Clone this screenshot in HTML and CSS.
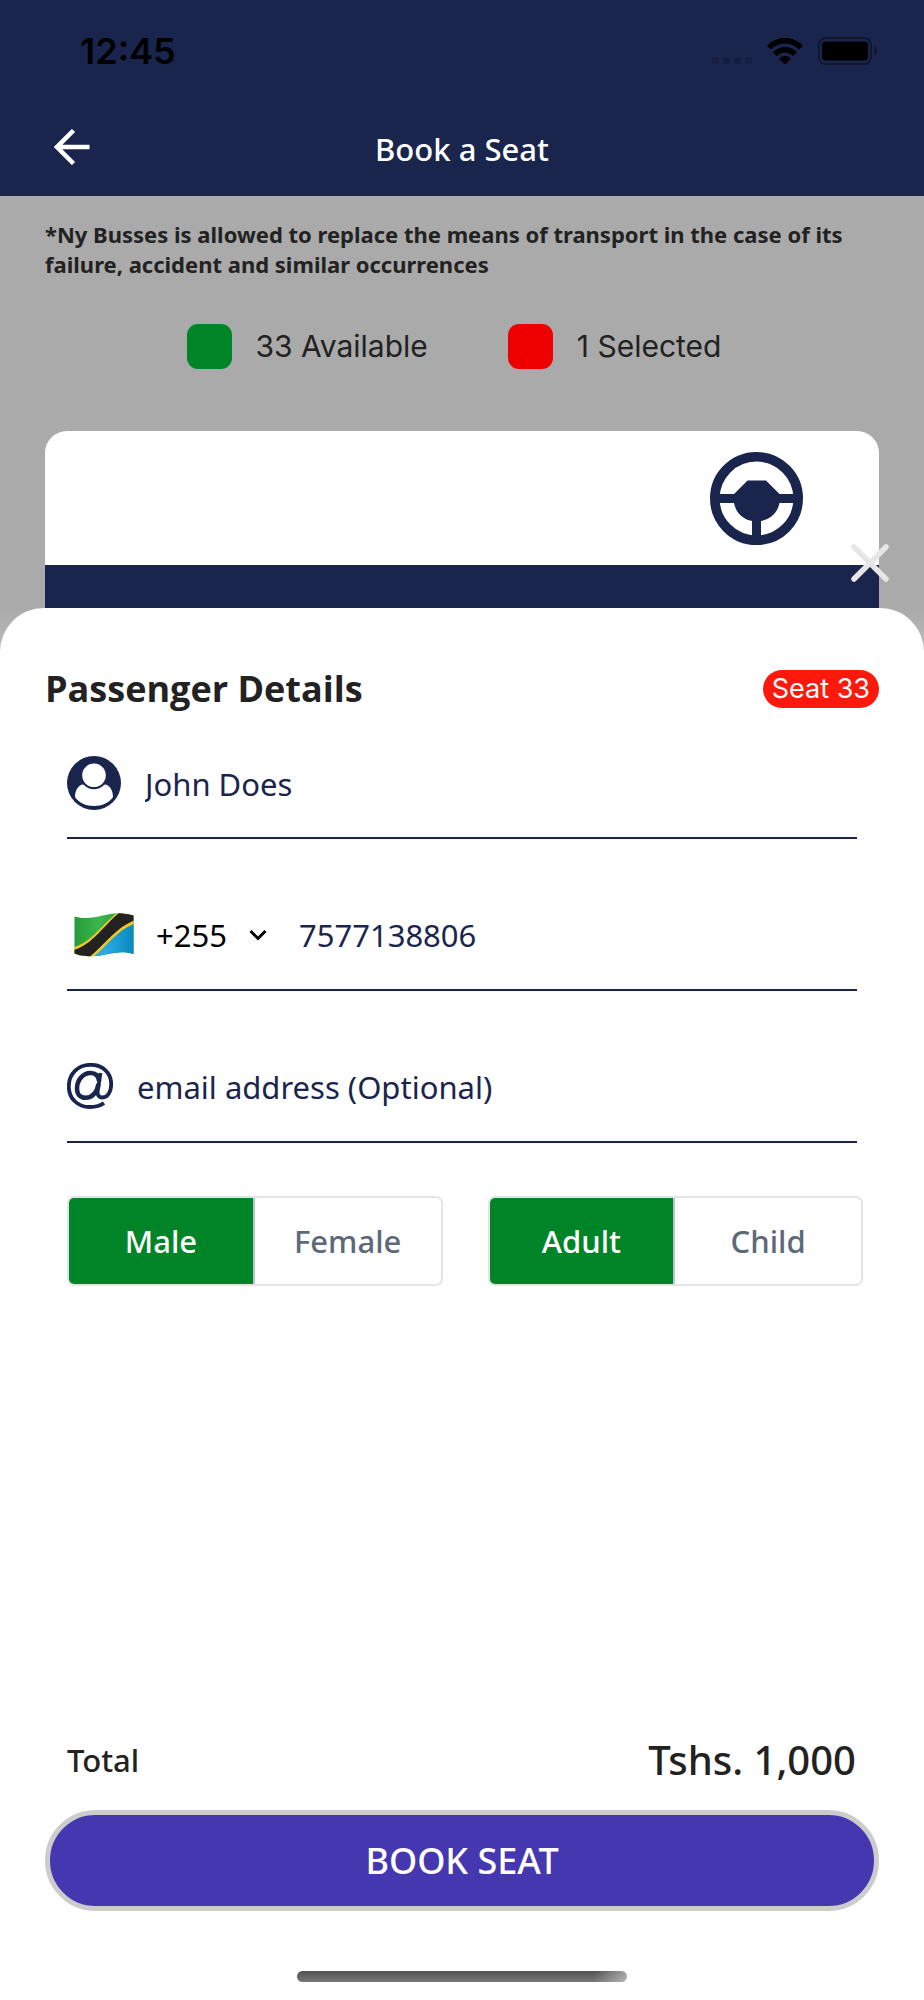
FILE: index.html
```html
<!DOCTYPE html>
<html lang="en">
<head>
<meta charset="utf-8">
<meta name="viewport" content="width=device-width, initial-scale=1">
<title>Book a Seat</title>
<link rel="stylesheet" href="styles.css">
</head>
<body>
<div class="app">
  <header class="header">
    <div class="status">
      <span class="status-time">12:45</span>
      <span class="status-icons">
        <span class="signal"><i></i><i></i><i></i><i></i></span>
        <svg class="wifi" viewBox="0 0 36 27" aria-hidden="true">
          <path d="M18 0C24.800 0 31 2.700 35.300 7.200Q35.900 7.900 35.300 8.600L32.700 11.100Q32 11.600 31.400 11C28 7.500 23.300 5.500 18 5.500S8 7.500 4.600 11Q4 11.600 3.300 11.100L.7 8.600Q.1 7.900.7 7.200C5 2.700 11.200 0 18 0Z"/>
          <path d="M18 9C22.500 9 26.500 10.800 29.400 13.700Q30 14.400 29.400 15L26.700 17.600Q26 18.200 25.300 17.600C23.300 15.700 20.800 14.600 18 14.600S12.700 15.700 10.700 17.600Q10 18.200 9.300 17.600L6.600 15Q6 14.400 6.600 13.700C9.500 10.800 13.500 9 18 9Z"/>
          <path d="M18 18C20 18 22 18.800 23.300 20.200Q23.700 20.800 23.200 21.400L18.700 26Q18 26.700 17.300 26L12.800 21.400Q12.300 20.800 12.700 20.200C14 18.800 16 18 18 18Z"/>
        </svg>
        <svg class="battery" viewBox="0 0 60 28" aria-hidden="true">
          <rect x="1" y="1" width="52" height="26" rx="7" fill="none" stroke="#11172f" stroke-width="2"/>
          <rect x="4" y="4.500" width="46" height="19" rx="4"/>
          <path d="M56 9.500Q59 10.500 59 14T56 18.500Z" fill="#11172f"/>
        </svg>
      </span>
    </div>
    <nav class="nav">
      <button class="back" type="button" aria-label="Back">
        <svg viewBox="0 0 36 36" aria-hidden="true"><path d="M35.500 18H3M19.500 1.500L3 18L19.500 34.500" fill="none" stroke="#fff" stroke-width="4.500"/></svg>
      </button>
      <h1 class="title">Book a Seat</h1>
    </nav>
  </header>

  <section class="preview">
    <p class="notice">*Ny Busses is allowed to replace the means of transport in the case of its failure, accident and similar occurrences</p>
    <div class="legend">
      <span class="legend-item"><i class="swatch swatch-free"></i>33 Available</span>
      <span class="legend-item"><i class="swatch swatch-picked"></i>1 Selected</span>
    </div>
    <div class="bus">
      <div class="cab">
        <svg class="wheel" viewBox="0 0 93 93" aria-hidden="true">
          <circle cx="46.500" cy="46.500" r="41.700" fill="none" stroke="#1a254e" stroke-width="9.600"/>
          <path fill="#1a254e" d="M5 42H24L37.500 28.500H56L69.500 42H88V51H69.500C68 60 60.500 67.500 51 69V88H42V69C32.500 67.500 25.500 60 24 51H5Z"/>
        </svg>
      </div>
      <div class="aisle"></div>
    </div>
  </section>

  <div class="sheet-area">
    <button class="close" type="button" aria-label="Close">
      <svg viewBox="0 0 38 38" aria-hidden="true"><path d="M3 3L35 35M35 3L3 35" fill="none" stroke="#e6e6e6" stroke-width="5.500" stroke-linecap="round"/></svg>
    </button>
    <form class="sheet">
      <div class="sheet-head">
        <h2 class="sheet-title">Passenger Details</h2>
        <span class="badge">Seat 33</span>
      </div>

      <div class="fields">
        <label class="field">
          <svg class="avatar" viewBox="0 0 54 54" aria-hidden="true">
            <circle cx="27" cy="27" r="27" fill="#1a254e"/>
            <path fill="#fff" d="M14.500 28.700C9.500 30.500 7.500 38 8.200 41.500C12 46.500 19 50 27 50S42 46.500 45.800 41.500C46.500 38 44.500 30.500 39.500 28.700Q37.500 28.200 36.500 29.500Q33 33.200 27 33.200T17.500 29.500Q16.500 28.200 14.500 28.700Z"/>
            <circle cx="27" cy="19.300" r="11.800" fill="#fff"/>
          </svg>
          <input class="input" type="text" aria-label="Name" value="John Does">
        </label>

        <div class="field field-phone">
          <svg class="flag" viewBox="0 0 60 44" aria-hidden="true">
            <defs>
              <clipPath id="cloth"><path d="M.5 3.500C20 8.500 32-1 48 .5Q55 .8 59.500 2.500V41C42 35.500 30 45 12 43Q5 42.500 .5 40.500Z"/></clipPath>
              <linearGradient id="green" x1="0" x2="1"><stop offset="0" stop-color="#239a37"/><stop offset=".4" stop-color="#3bb54c"/><stop offset="1" stop-color="#239a37"/></linearGradient>
              <linearGradient id="blue" x1="0" x2="1"><stop offset=".3" stop-color="#2bade4"/><stop offset="1" stop-color="#0787be"/></linearGradient>
            </defs>
            <g clip-path="url(#cloth)">
              <path fill="url(#green)" d="M0 0H60V44H0Z"/>
              <path fill="url(#blue)" d="M60 9C46 14 32 30 18 44H60Z"/>
              <path fill="#f3c823" d="M0 34C18 29 27 12 43 0H60V11C43 17 34 32 19 44H0Z"/>
              <path fill="#222" d="M0 37C19 31 29 13 45 0H60V7.500C43 14 31 31 15.500 44H0Z"/>
            </g>
          </svg>
          <span class="code">
            <select class="code-select" aria-label="Country code"><option>+255</option></select>
            <svg class="chevron" viewBox="0 0 18 12" aria-hidden="true"><path d="M1.500 2L9 9.500L16.500 2" fill="none" stroke="#000" stroke-width="3"/></svg>
          </span>
          <input class="input" type="tel" aria-label="Phone number" value="7577138806">
        </div>

        <label class="field field-email">
          <svg class="at" viewBox="0 0 46 46" aria-hidden="true">
            <g fill="none" stroke="#1a254e" stroke-width="3.500">
              <path d="M37 40C33 43 28 44 23 44C10.500 44 1.800 35.500 1.800 23.500C1.800 10.500 11 1.800 23.500 1.800C36 1.800 44.200 10 44.200 21C44.200 29 40.500 34.500 35.500 34.500C31.500 34.500 30 31.500 30.800 27.500L33.500 10" stroke-width="3.800"/>
              <path d="M32 18C31.500 12.500 28 10 23.500 10C15.500 10 10 17.500 10 25.500C10 31.500 13.500 34.800 18.500 34.800C25.500 34.800 30 29 31.500 21" stroke-width="4.500"/>
            </g>
          </svg>
          <input class="input" type="email" aria-label="Email address" placeholder="email address (Optional)">
        </label>
      </div>

      <div class="toggles">
        <div class="toggle" role="radiogroup" aria-label="Gender">
          <label class="option"><input type="radio" name="gender" checked><span>Male</span></label>
          <label class="option"><input type="radio" name="gender"><span>Female</span></label>
        </div>
        <div class="toggle" role="radiogroup" aria-label="Age group">
          <label class="option"><input type="radio" name="age" checked><span>Adult</span></label>
          <label class="option"><input type="radio" name="age"><span>Child</span></label>
        </div>
      </div>

      <div class="total">
        <span class="total-label">Total</span>
        <span class="total-value">Tshs. 1,000</span>
      </div>
      <button class="book" type="button">BOOK SEAT</button>
      <div class="home-indicator"></div>
    </form>
  </div>
</div>
</body>
</html>
```

FILE: styles.css
```css
* { box-sizing: border-box; }

body {
  margin: 0;
  background: #aaa;
  color: #222;
  font-family: "Noto Sans", "Open Sans", sans-serif;
}

button, input, select { font: inherit; }
svg { display: block; flex: none; }

.app {
  display: flex;
  flex-direction: column;
  min-height: 100vh;
}

.header {
  height: 196px;
  background: #1a254e;
}

.status {
  display: flex;
  align-items: center;
  justify-content: space-between;
  height: 102px;
  padding: 0 46px 0 80px;
  color: #000;
}

.status-time {
  font: 600 36px/40px Inter, sans-serif;
}

.status-icons { display: flex; align-items: center; }

.signal { display: flex; gap: 4px; margin: 18px 15px 0 0; }
.signal i { width: 7px; height: 7px; border-radius: 2px; background: #161f43; }
.wifi { width: 36px; height: 27px; margin-right: 15px; }
.battery { width: 60px; height: 28px; }

.nav {
  display: grid;
  grid-template-columns: 36px 1fr 36px;
  align-items: center;
  height: 90px;
  padding: 0 54px;
}

.back, .close {
  padding: 0;
  border: 0;
  background: none;
  cursor: pointer;
}
.back svg { width: 36px; height: 36px; }

.title {
  margin: 4px 0 0;
  color: #fff;
  font-size: 31px;
  line-height: 40px;
  font-weight: 500;
  text-align: center;
}

.preview { padding: 23px 45px 0; }

.notice {
  margin: 0;
  font-size: 22px;
  line-height: 30px;
  font-weight: 700;
}

.legend {
  display: flex;
  justify-content: center;
  gap: 80px;
  margin: 45px 0 62px;
  padding-right: 16px;
}

.legend-item {
  display: flex;
  align-items: center;
  gap: 24px;
  font: 400 30px/45px Inter, sans-serif;
}

.swatch { width: 45px; height: 45px; border-radius: 11px; }
.swatch-free { background: #008428; }
.swatch-picked { background: #ee0000; }

.bus {
  overflow: hidden;
  border-radius: 22px 22px 0 0;
  background: #fff;
}

.cab {
  display: flex;
  justify-content: flex-end;
  padding: 21px 76px 20px;
}
.wheel { width: 93px; height: 93px; }
.aisle { height: 43px; background: #1a254e; }

.sheet-area {
  position: relative;
  display: flex;
  flex: 1;
  background: linear-gradient(#aaa, #bbb 40px);
}

.close {
  position: absolute;
  top: -64px;
  right: 35px;
  z-index: 1;
}
.close svg { width: 38px; height: 38px; }

.sheet {
  display: flex;
  flex: 1;
  flex-direction: column;
  min-width: 0;
  padding: 56px 45px 18px;
  border-radius: 44px 44px 0 0;
  background: #fff;
}

.sheet-head {
  display: flex;
  align-items: center;
  justify-content: space-between;
}

.sheet-title {
  margin: 0;
  font-family: "Open Sans", "Noto Sans", sans-serif;
  font-size: 36px;
  line-height: 50px;
  font-weight: 700;
}

.badge {
  padding: 0 9px;
  border-radius: 20px;
  background: #ff190c;
  color: #fff;
  font: 400 27px/38px Inter, sans-serif;
}

.fields { padding: 0 22px; }

.field {
  display: flex;
  align-items: center;
  gap: 24px;
  height: 152px;
  padding-top: 42px;
  border-bottom: 2px solid #1a254e;
}
.fields .field:first-child { height: 125px; padding-top: 16px; }

.avatar { width: 54px; height: 54px; }

.field .avatar, .field .at { margin-bottom: 2px; }

.input {
  flex: 1;
  min-width: 0;
  height: 50px;
  padding: 0;
  border: 0;
  outline: 0;
  background: none;
  color: #1a254e;
  font-size: 31px;
}
.input::placeholder { color: #1a254e; opacity: 1; }

.field-phone { padding-left: 7px; gap: 22px; }
.flag { width: 60px; height: 44px; }

.code { display: flex; align-items: center; gap: 22px; margin-right: 10px; }
.code-select {
  appearance: none;
  height: 50px;
  padding: 0;
  border: 0;
  background: none;
  color: #000;
  font-size: 31px;
}
.chevron { width: 18px; height: 12px; }

.at { width: 46px; height: 46px; }

.toggles {
  display: grid;
  grid-template-columns: 1fr 1fr;
  gap: 45px;
  padding: 53px 16px 0 22px;
}

.toggle {
  display: grid;
  grid-template-columns: 1fr 1fr;
  overflow: hidden;
  border: 2px solid #e4e4e6;
  border-radius: 7px;
}

.option {
  position: relative;
  color: #5d6878;
  font-size: 31px;
  line-height: 86px;
  font-weight: 500;
  text-align: center;
  cursor: pointer;
}
.option:first-child { border-right: 2px solid #bcc4d2; }
.option input {
  position: absolute;
  inset: 0;
  margin: 0;
  opacity: 0;
}
.option span { display: block; }
.option input:checked + span { background: #008428; color: #fff; }

.total {
  display: flex;
  align-items: center;
  justify-content: space-between;
  margin-top: auto;
  padding: 0 23px 20px 22px;
}
.total-label { font-size: 31px; line-height: 60px; font-weight: 500; }
.total-value { font-size: 40px; line-height: 60px; font-weight: 500; }

.book {
  height: 101px;
  border: 5px solid #ccc;
  border-radius: 51px;
  background: #4437b0;
  color: #fff;
  font-size: 36px;
  line-height: 50px;
  font-weight: 500;
  cursor: pointer;
}

.home-indicator {
  align-self: center;
  width: 330px;
  height: 11px;
  margin-top: 60px;
  border-radius: 6px;
  background: linear-gradient(90deg, transparent 90%, rgba(255, 255, 255, .45)), linear-gradient(#505050, #787878);
}
```
